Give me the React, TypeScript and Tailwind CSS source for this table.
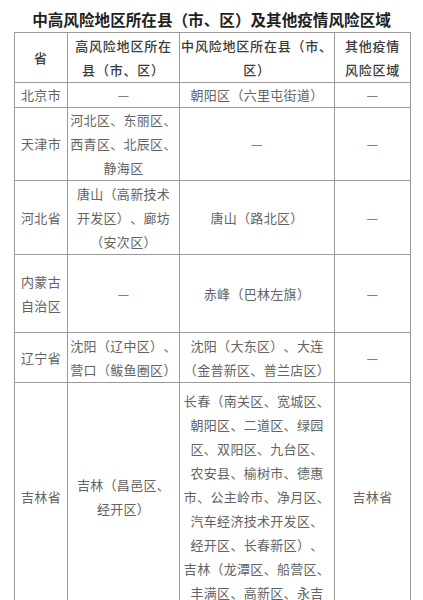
import React from "react"

type Row = {
  h: string
  cells: string[][]
}

const rows: Row[] = [
  {
    h: "h-[25px]",
    cells: [["北京市"], ["—"], ["朝阳区（六里屯街道）"], ["—"]],
  },
  {
    h: "h-[73px]",
    cells: [["天津市"], ["河北区、东丽区、", "西青区、北辰区、", "静海区"], ["—"], ["—"]],
  },
  {
    h: "h-[74px]",
    cells: [["河北省"], ["唐山（高新技术", "开发区）、廊坊", "（安次区）"], ["唐山（路北区）"], ["—"]],
  },
  {
    h: "h-[78px]",
    cells: [["内蒙古", "自治区"], ["—"], ["赤峰（巴林左旗）"], ["—"]],
  },
  {
    h: "h-[50px]",
    cells: [
      ["辽宁省"],
      ["沈阳（辽中区）、", "营口（鲅鱼圈区）"],
      ["沈阳（大东区）、大连", "（金普新区、普兰店区）"],
      ["—"],
    ],
  },
  {
    h: "h-[228px]",
    cells: [
      ["吉林省"],
      ["吉林（昌邑区、", "经开区）"],
      [
        "长春（南关区、宽城区、",
        "朝阳区、二道区、绿园",
        "区、双阳区、九台区、",
        "农安县、榆树市、德惠",
        "市、公主岭市、净月区、",
        "汽车经济技术开发区、",
        "经开区、长春新区）、",
        "吉林（龙潭区、船营区、",
        "丰满区、高新区、永吉",
      ],
      ["吉林省"],
    ],
  },
]

function Lines({ lines }: { lines: string[] }) {
  return (
    <>
      {lines.map((l, i) => (
        <div key={i} className="whitespace-nowrap">
          {l}
        </div>
      ))}
    </>
  )
}

export default function App() {
  return (
    <div
      className="w-[423px] h-[600px] overflow-hidden bg-white [text-spacing-trim:space-all]"
      style={{ fontFamily: '"Noto Sans CJK SC", "Noto Sans", sans-serif' }}
    >
      <h1 className="pt-[8px] h-[32px] text-center text-[15.6px] leading-[22px] font-bold text-[#1f1f1f] whitespace-nowrap">
        中高风险地区所在县（市、区）及其他疫情风险区域
      </h1>
      <table className="ml-[14px] w-[396px] table-fixed border-collapse border border-[#9a9a9a] text-[13px] leading-[24px] tracking-[0.3px] text-[#636363]">
        <colgroup>
          <col className="w-[53px]" />
          <col className="w-[112px]" />
          <col className="w-[155px]" />
          <col className="w-[76px]" />
        </colgroup>
        <thead>
          <tr className="h-[50px] text-[#3a3a3a] tracking-[0.8px]">
            <th className="border border-[#9a9a9a] p-0 align-middle font-medium">省</th>
            <th className="border border-[#9a9a9a] p-0 align-middle font-medium">
              <Lines lines={["高风险地区所在", "县（市、区）"]} />
            </th>
            <th className="border border-[#9a9a9a] p-0 align-middle font-medium">
              <Lines lines={["中风险地区所在县（市、", "区）"]} />
            </th>
            <th className="border border-[#9a9a9a] p-0 align-middle font-medium">
              <Lines lines={["其他疫情", "风险区域"]} />
            </th>
          </tr>
        </thead>
        <tbody>
          {rows.map((row, i) => (
            <tr key={i} className={row.h}>
              {row.cells.map((c, j) => (
                <td key={j} className="border border-[#9a9a9a] p-0 text-center align-middle">
                  <Lines lines={c} />
                </td>
              ))}
            </tr>
          ))}
        </tbody>
      </table>
    </div>
  )
}
